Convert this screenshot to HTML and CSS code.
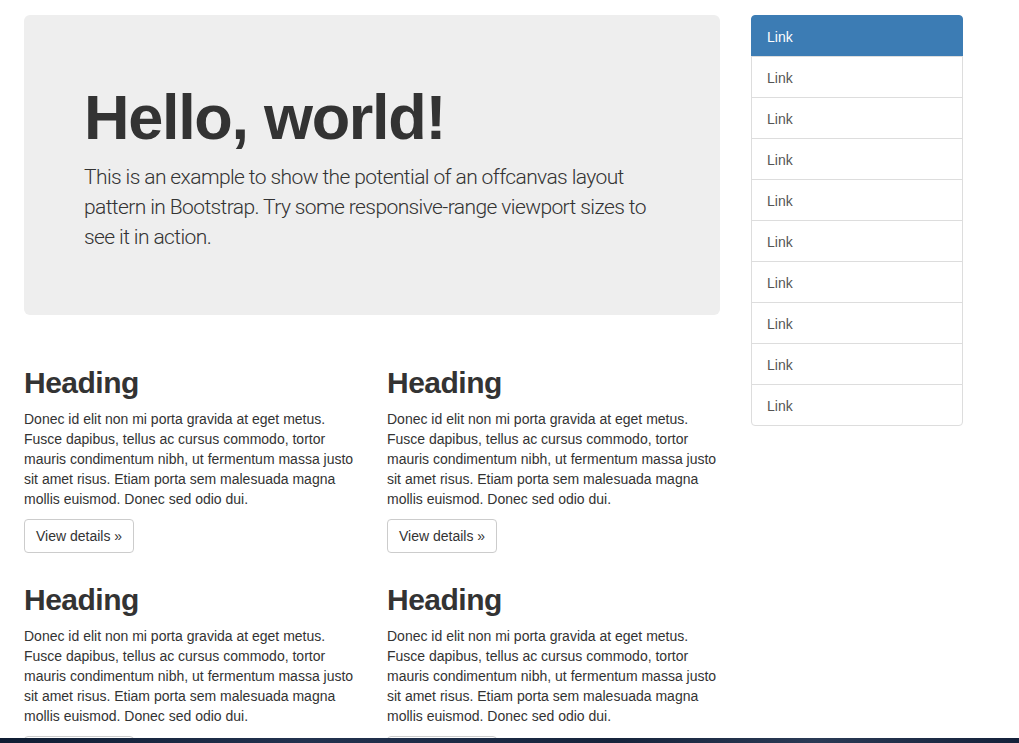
FILE: index.html
```html
<!DOCTYPE html>
<html lang="en">
<head>
<meta charset="utf-8">
<title>Off Canvas Template</title>
<link rel="stylesheet" href="styles.css">
</head>
<body>
<div class="container">
  <main class="main">
    <div class="jumbotron">
      <h1>Hello, world!</h1>
      <p>This is an example to show the potential of an offcanvas layout pattern in Bootstrap. Try some responsive-range viewport sizes to see it in action.</p>
    </div>
    <div class="grid">
      <div class="col">
        <h2>Heading</h2>
        <p class="text">Donec id elit non mi porta gravida at eget metus. Fusce dapibus, tellus ac cursus commodo, tortor mauris condimentum nibh, ut fermentum massa justo sit amet risus. Etiam porta sem malesuada magna mollis euismod. Donec sed odio dui.</p>
        <p class="action"><a class="btn" href="#">View details &raquo;</a></p>
      </div>
      <div class="col">
        <h2>Heading</h2>
        <p class="text">Donec id elit non mi porta gravida at eget metus. Fusce dapibus, tellus ac cursus commodo, tortor mauris condimentum nibh, ut fermentum massa justo sit amet risus. Etiam porta sem malesuada magna mollis euismod. Donec sed odio dui.</p>
        <p class="action"><a class="btn" href="#">View details &raquo;</a></p>
      </div>
      <div class="col">
        <h2>Heading</h2>
        <p class="text">Donec id elit non mi porta gravida at eget metus. Fusce dapibus, tellus ac cursus commodo, tortor mauris condimentum nibh, ut fermentum massa justo sit amet risus. Etiam porta sem malesuada magna mollis euismod. Donec sed odio dui.</p>
        <p class="action"><a class="btn" href="#">View details &raquo;</a></p>
      </div>
      <div class="col">
        <h2>Heading</h2>
        <p class="text">Donec id elit non mi porta gravida at eget metus. Fusce dapibus, tellus ac cursus commodo, tortor mauris condimentum nibh, ut fermentum massa justo sit amet risus. Etiam porta sem malesuada magna mollis euismod. Donec sed odio dui.</p>
        <p class="action"><a class="btn" href="#">View details &raquo;</a></p>
      </div>
    </div>
  </main>
  <aside class="sidebar">
    <nav class="list-group">
      <a href="#" class="list-group-item active">Link</a>
      <a href="#" class="list-group-item">Link</a>
      <a href="#" class="list-group-item">Link</a>
      <a href="#" class="list-group-item">Link</a>
      <a href="#" class="list-group-item">Link</a>
      <a href="#" class="list-group-item">Link</a>
      <a href="#" class="list-group-item">Link</a>
      <a href="#" class="list-group-item">Link</a>
      <a href="#" class="list-group-item">Link</a>
      <a href="#" class="list-group-item">Link</a>
    </nav>
  </aside>
</div>
<div class="desktop-edge"></div>
</body>
</html>
```
FILE: styles.css
```css
html {
  overflow: hidden;
}
body {
  margin: 0;
  font-family: "Liberation Sans", Arial, sans-serif;
  font-size: 14px;
  line-height: 20px;
  color: #333;
  background: #fff;
}
.container {
  display: flex;
  align-items: flex-start;
  gap: 31px;
  padding: 15px 0 0 24px;
}
.main {
  width: 696px;
  flex: none;
}
.jumbotron {
  background: #eee;
  border-radius: 6px;
  padding: 48px 60px;
  margin-bottom: 30px;
}
.jumbotron h1 {
  font-size: 63px;
  line-height: 1.1;
  font-weight: 700;
  margin: 20px 0 10px;
  letter-spacing: -1.3px;
}
.jumbotron p {
  font-size: 21px;
  line-height: 30px;
  font-weight: 300;
  margin: 0 0 15px;
  letter-spacing: -0.6px;
  font-family: "Roboto", "Liberation Sans", sans-serif;
}
.grid {
  display: grid;
  grid-template-columns: 333px 333px;
  column-gap: 30px;
}
.col h2 {
  font-size: 30px;
  line-height: 1.1;
  font-weight: 700;
  letter-spacing: -0.5px;
  margin: 20px 0 10px;
  padding-top: 1px;
  height: 32px;
}
.col .text {
  margin: 0 0 9px;
  padding-top: 1px;
}
.col .action {
  margin: 0 0 9px;
  padding-top: 1px;
}
.btn {
  display: inline-block;
  padding: 6px 11px;
  border: 1px solid #ccc;
  border-radius: 4px;
  color: #333;
  text-decoration: none;
  background: #fff;
}
.sidebar {
  width: 212px;
  flex: none;
}
.list-group {
  display: flex;
  flex-direction: column;
}
.list-group-item {
  display: block;
  padding: 11px 15px 9px;
  border: 1px solid #ddd;
  margin-bottom: -1px;
  color: #555;
  text-decoration: none;
  background: #fff;
}
.list-group-item:first-child {
  border-radius: 4px 4px 0 0;
}
.list-group-item:last-child {
  border-radius: 0 0 4px 4px;
  margin-bottom: 0;
}
.list-group-item.active {
  background: #3c7cb4;
  border-color: #3c7cb4;
  color: #fff;
}
.desktop-edge {
  position: fixed;
  left: 0;
  right: 0;
  bottom: 0;
  height: 5px;
  background: linear-gradient(90deg, #0f1d33, #22324f 30%, #16243c 60%, #2a3a55 80%, #14213a);
}
```
